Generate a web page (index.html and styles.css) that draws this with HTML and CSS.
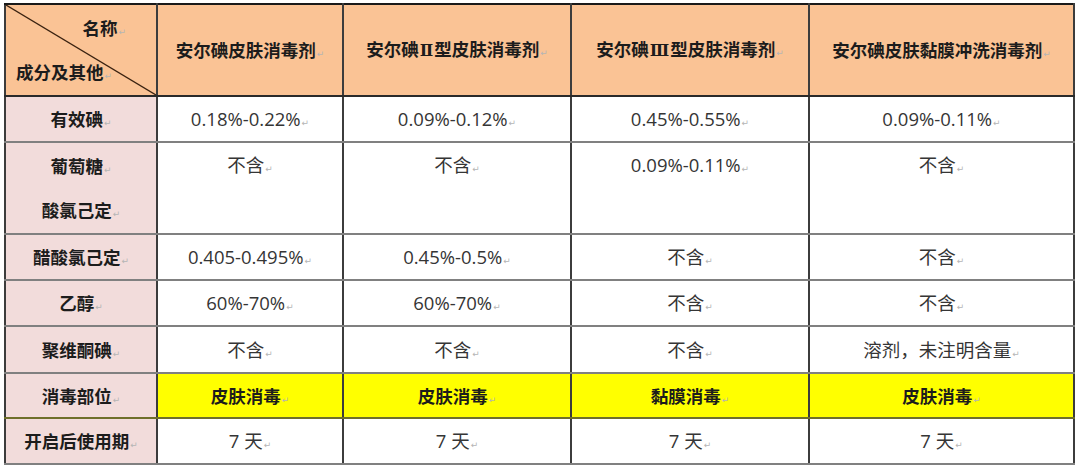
FILE: index.html
```html
<!DOCTYPE html>
<html lang="zh-CN">
<head>
<meta charset="utf-8">
<title>安尔碘对比</title>
<link rel="stylesheet" href="styles.css">
</head>
<body>
<table class="tbl">
  <colgroup>
    <col class="c1"><col class="c2"><col class="c3"><col class="c4"><col class="c5">
  </colgroup>
  <thead>
    <tr class="r-head">
      <th class="corner">
        <svg class="diag" viewBox="0 0 100 100" preserveAspectRatio="none"><line x1="0" y1="0" x2="100" y2="100" stroke="#3a2210" stroke-width="1.3" vector-effect="non-scaling-stroke"/></svg>
        <div class="line corner-top">名称<span class="pm">↵</span></div>
        <div class="line corner-bot">成分及其他<span class="pm">↵</span></div>
      </th>
      <th>安尔碘皮肤消毒剂<span class="pm">↵</span></th>
      <th>安尔碘<span class="rn">Ⅱ</span>型皮肤消毒剂<span class="pm">↵</span></th>
      <th>安尔碘<span class="rn">Ⅲ</span>型皮肤消毒剂<span class="pm">↵</span></th>
      <th>安尔碘皮肤黏膜冲洗消毒剂<span class="pm">↵</span></th>
    </tr>
  </thead>
  <tbody>
    <tr class="r1">
      <td class="lbl">有效碘<span class="pm">↵</span></td>
      <td>0.18%-0.22%<span class="pm">↵</span></td>
      <td>0.09%-0.12%<span class="pm">↵</span></td>
      <td>0.45%-0.55%<span class="pm">↵</span></td>
      <td>0.09%-0.11%<span class="pm">↵</span></td>
    </tr>
    <tr class="r2">
      <td class="lbl two"><div class="line">葡萄糖<span class="pm">↵</span></div><div class="line">酸氯己定<span class="pm">↵</span></div></td>
      <td class="top">不含<span class="pm">↵</span></td>
      <td class="top">不含<span class="pm">↵</span></td>
      <td class="top">0.09%-0.11%<span class="pm">↵</span></td>
      <td class="top">不含<span class="pm">↵</span></td>
    </tr>
    <tr class="r1">
      <td class="lbl">醋酸氯己定<span class="pm">↵</span></td>
      <td>0.405-0.495%<span class="pm">↵</span></td>
      <td>0.45%-0.5%<span class="pm">↵</span></td>
      <td>不含<span class="pm">↵</span></td>
      <td>不含<span class="pm">↵</span></td>
    </tr>
    <tr class="r1">
      <td class="lbl">乙醇<span class="pm">↵</span></td>
      <td>60%-70%<span class="pm">↵</span></td>
      <td>60%-70%<span class="pm">↵</span></td>
      <td>不含<span class="pm">↵</span></td>
      <td>不含<span class="pm">↵</span></td>
    </tr>
    <tr class="r5">
      <td class="lbl">聚维酮碘<span class="pm">↵</span></td>
      <td>不含<span class="pm">↵</span></td>
      <td>不含<span class="pm">↵</span></td>
      <td>不含<span class="pm">↵</span></td>
      <td>溶剂，未注明含量<span class="pm">↵</span></td>
    </tr>
    <tr class="r6 hl">
      <td class="lbl">消毒部位<span class="pm">↵</span></td>
      <td class="yel">皮肤消毒<span class="pm">↵</span></td>
      <td class="yel">皮肤消毒<span class="pm">↵</span></td>
      <td class="yel">黏膜消毒<span class="pm">↵</span></td>
      <td class="yel">皮肤消毒<span class="pm">↵</span></td>
    </tr>
    <tr class="r1">
      <td class="lbl">开启后使用期<span class="pm">↵</span></td>
      <td>7 天<span class="pm">↵</span></td>
      <td>7 天<span class="pm">↵</span></td>
      <td>7 天<span class="pm">↵</span></td>
      <td>7 天<span class="pm">↵</span></td>
    </tr>
  </tbody>
</table>
</body>
</html>
```

FILE: styles.css
```css
html, body {
  margin: 0;
  padding: 0;
  background: #ffffff;
}

.tbl {
  margin: 3px 0 0 4px;
  border-collapse: collapse;
  table-layout: fixed;
  width: 1069px;
  font-family: "Open Sans", "Noto Sans CJK SC", sans-serif;
  font-size: 18.5px;
  color: #353535;
  border: 2px solid #1a1a1a;
}

.c1 { width: 152px; }
.c2 { width: 186px; }
.c3 { width: 228px; }
.c4 { width: 238px; }
.c5 { width: 265px; }

.tbl th,
.tbl td {
  padding: 0;
  text-align: center;
  vertical-align: middle;
  line-height: 20px;
  border-left: 2px solid #3c3c3c;
  border-right: 2px solid #3c3c3c;
  border-top: 2px solid #808080;
  border-bottom: 2px solid #808080;
  white-space: nowrap;
}

.tbl th {
  background: #fac395;
  font-family: "Noto Sans CJK SC", sans-serif;
  font-size: 17.5px;
  font-weight: 700;
  color: #1c1c1c;
  border-bottom: 2px solid #2a2a2a;
  border-top: 2px solid #1a1a1a;
}

.r-head { height: 92px; }
.r1 { height: 46px; }
.r2 { height: 92px; }
.r5 { height: 47px; }
.r6 { height: 45px; }

.line {
  padding: 12px 0;
  line-height: 20px;
}

.tbl td.top {
  vertical-align: top;
  padding-top: 12px;
}

.corner {
  position: relative;
}

.diag {
  position: absolute;
  left: 0;
  top: 0;
  width: 100%;
  height: 100%;
}

.corner-top {
  text-align: right;
  padding-right: 30px;
}

.corner-bot {
  text-align: left;
  padding-left: 10px;
}

.tbl td.lbl {
  background: #f2dcdb;
  font-family: "Noto Sans CJK SC", sans-serif;
  font-size: 17.5px;
  font-weight: 700;
  color: #1c1c1c;
}

.tbl td.yel {
  background: #ffff00;
  font-family: "Noto Sans CJK SC", sans-serif;
  font-size: 17.5px;
  font-weight: 700;
  color: #1c1c1c;
}

.hl td {
  border-top-color: #6f6f2a;
  border-bottom-color: #6f6f2a;
}

.rn {
  font-family: "DejaVu Serif", serif;
  font-weight: 700;
  font-size: 16px;
  margin: 0 1px;
}

.pm {
  font-family: "DejaVu Sans", sans-serif;
  font-size: 9px;
  line-height: 1;
  font-weight: 400;
  color: #b5b5b5;
  margin-left: 1px;
}
```
